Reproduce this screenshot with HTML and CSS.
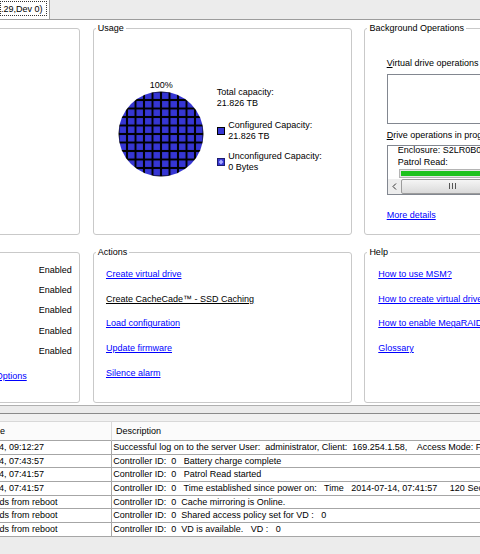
FILE: index.html
```html
<!DOCTYPE html>
<html lang="en">
<head>
<meta charset="utf-8">
<title>MegaRAID Storage Manager - Dashboard</title>
<link rel="stylesheet" href="styles.css">
</head>
<body>
<div class="tabstrip">
  <div class="tab"><span class="tab-label">.29,Dev 0)</span></div>
</div>

<main class="dash">
  <fieldset class="panel props">
    <legend>Properties</legend>
  </fieldset>

  <fieldset class="panel usage">
    <legend>Usage</legend>
    <div class="usage-body">
      <div class="pie">
        <div class="pie-pct">100%</div>
        <svg class="pie-chart" width="86" height="86" viewBox="0 0 86 86">
          <defs>
            <pattern id="grid" x="0.5" y="0.5" width="8.5" height="8.5" patternUnits="userSpaceOnUse">
              <rect width="8.5" height="8.5" fill="#000"/>
              <rect x="1" y="1" width="6.5" height="6.5" fill="#3636d4"/>
            </pattern>
          </defs>
          <circle cx="43" cy="43" r="42.5" fill="url(#grid)"/>
        </svg>
      </div>
      <div class="legend">
        <div class="legend-item"><div>Total capacity:<br>21.826 TB</div></div>
        <div class="legend-item conf"><span class="swatch swatch-conf"></span><div>Configured Capacity:<br>21.826 TB</div></div>
        <div class="legend-item unconf">
          <svg class="swatch" width="8" height="8" viewBox="0 0 8 8">
            <rect x="0.5" y="0.5" width="7" height="7" fill="#3636d4" stroke="#1c1c6e"/>
            <path d="M4 1.6 L6.4 4 L4 6.4 L1.6 4 Z" fill="#a9a9ff"/>
          </svg>
          <div>Unconfigured Capacity:<br>0 Bytes</div>
        </div>
      </div>
    </div>
  </fieldset>

  <fieldset class="panel bgops">
    <legend>Background Operations</legend>
    <div class="bg-body">
      <div class="bg-label"><u>V</u>irtual drive operations in progress:</div>
      <div class="vbox"></div>
      <div class="bg-label second"><u>D</u>rive operations in progress:</div>
      <div class="dlist">
        <div class="dl-line first">Enclosure: S2LR0B0S1 Slot: 3</div>
        <div class="dl-line">Patrol Read:</div>
        <div class="progress"><div class="progress-fill"></div></div>
        <div class="hscroll">
          <div class="hs-btn">
            <svg width="5" height="7" viewBox="0 0 5 7"><path d="M4 0.5 L1 3.5 L4 6.5" fill="none" stroke="#333" stroke-width="1"/></svg>
          </div>
          <div class="hs-thumb">
            <svg width="7" height="6" viewBox="0 0 7 6"><path d="M0.5 0 V6 M3.5 0 V6 M6.5 0 V6" stroke="#555" stroke-width="1"/></svg>
          </div>
        </div>
      </div>
      <a class="link more" href="#">More details</a>
    </div>
  </fieldset>

  <fieldset class="panel features">
    <legend>Features</legend>
    <div class="feat-body">
      <div class="feat-row">Enabled</div>
      <div class="feat-row">Enabled</div>
      <div class="feat-row">Enabled</div>
      <div class="feat-row">Enabled</div>
      <div class="feat-row">Enabled</div>
      <a class="link opt" href="#">Advanced Options</a>
    </div>
  </fieldset>

  <fieldset class="panel actions">
    <legend>Actions</legend>
    <nav class="link-list">
      <a class="link" href="#">Create virtual drive</a>
      <a class="link plain" href="#">Create CacheCade™ - SSD Caching</a>
      <a class="link" href="#">Load configuration</a>
      <a class="link" href="#">Update firmware</a>
      <a class="link" href="#">Silence alarm</a>
    </nav>
  </fieldset>

  <fieldset class="panel help">
    <legend>Help</legend>
    <nav class="link-list">
      <a class="link" href="#">How to use MSM?</a>
      <a class="link" href="#">How to create virtual drives?</a>
      <a class="link" href="#">How to enable MegaRAID Advanced Software Options?</a>
      <a class="link" href="#">Glossary</a>
    </nav>
  </fieldset>
</main>

<div class="splitter"><div class="split-groove"></div></div>

<section class="log">
  <div class="log-table">
    <div class="th c1">Date/Time</div><div class="th c2">Description</div>
    <div class="td c1">2014-07-14, 09:12:27</div><div class="td c2">Successful log on to the server User:  administrator, Client:  169.254.1.58,    Access Mode: Full</div>
    <div class="td c1">2014-07-14, 07:43:57</div><div class="td c2">Controller ID:  0   Battery charge complete</div>
    <div class="td c1">2014-07-14, 07:41:57</div><div class="td c2">Controller ID:  0   Patrol Read started</div>
    <div class="td c1">2014-07-14, 07:41:57</div><div class="td c2">Controller ID:  0   Time established since power on:   Time   2014-07-14, 07:41:57     120 Seconds</div>
    <div class="td c1">125 seconds from reboot</div><div class="td c2">Controller ID:  0  Cache mirroring is Online.</div>
    <div class="td c1">125 seconds from reboot</div><div class="td c2">Controller ID:  0  Shared access policy set for VD :   0</div>
    <div class="td c1">125 seconds from reboot</div><div class="td c2">Controller ID:  0  VD is available.   VD :   0</div>
  </div>
</section>
</body>
</html>
```
FILE: styles.css
```css
* { box-sizing: border-box; }
html, body { margin: 0; padding: 0; }
body {
  width: 480px;
  height: 554px;
  overflow: hidden;
  font-family: "Liberation Sans", Arial, sans-serif;
  font-size: 9px;
  line-height: 11px;
  color: #000;
  background: #ececec;
}

/* tab strip */
.tabstrip {
  height: 20px;
  background: #ececec;
  border-bottom: 1px solid #9c9c9c;
  display: flex;
  align-items: flex-start;
}
.tab {
  height: 19px;
  background: #fff;
  border-right: 1px solid #a0a0a0;
  padding: 1px 2px 0 0;
}
.tab-label {
  display: block;
  height: 15px;
  padding: 1px 3px 0 0;
  border: 1px dotted #333;
  line-height: 12px;
  white-space: nowrap;
}

/* dashboard grid */
.dash {
  background: #fff;
  display: grid;
  grid-template-columns: 140px 259px 1fr;
  grid-template-rows: 212px 156px;
  column-gap: 12.7px;
  row-gap: 12.5px;
  width: 660px;
  margin-left: -60px;
  padding: 2.5px 0 2px;
}
.panel {
  margin: 0;
  padding: 0;
  border: 1px solid #c9c9c9;
  border-radius: 3px;
  min-width: 0;
  background: #fff;
}
.panel > legend {
  margin-left: 2px;
  padding: 0 2px;
  line-height: 11px;
  white-space: nowrap;
}

/* usage */
.usage-body {
  display: flex;
  align-items: flex-start;
  padding: 46.5px 0 0 24.5px;
}
.pie {
  width: 86px;
  display: flex;
  flex-direction: column;
  align-items: center;
}
.pie-chart { display: block; }
.legend {
  margin: 6.5px 0 0 12.5px;
  display: flex;
  flex-direction: column;
  line-height: 11.5px;
  white-space: nowrap;
}
.legend-item { display: flex; align-items: center; gap: 3.5px; }
.legend-item.conf { margin-top: 10px; }
.legend-item.unconf { margin-top: 8px; }
.swatch { width: 8px; height: 8px; flex: none; display: block; }
.swatch-conf { background: #3636d4; border: 1px solid #000; }

/* background operations */
.bg-body {
  display: flex;
  flex-direction: column;
  padding: 24px 0 0 21.3px;
}
.bg-label { white-space: nowrap; }
.bg-label.second { margin-top: 5.5px; }
.vbox {
  height: 50px;
  margin-top: 5.8px;
  border: 1px solid #828790;
  background: #fff;
}
.dlist {
  height: 49.5px;
  margin-top: 4.5px;
  border: 1px solid #828790;
  display: flex;
  flex-direction: column;
  overflow: hidden;
}
.dl-line { padding-left: 10px; white-space: nowrap; }
.dl-line.first { margin-top: -1.5px; }
.dl-line + .dl-line { margin-top: 1.5px; }
.progress {
  height: 8.4px;
  margin: 1px 0 0 11.7px;
  border: 1px solid #b4b4b4;
  background: #e6e6e6;
  padding: 1px 0 1px 1px;
}
.progress-fill { height: 100%; background: #1ec21e; }
.hscroll {
  margin-top: auto;
  height: 15px;
  display: flex;
  background: #ededed;
}
.hs-btn {
  width: 13px;
  flex: none;
  display: flex;
  align-items: center;
  justify-content: center;
}
.hs-thumb {
  width: 104px;
  flex: none;
  border: 1px solid #9c9c9c;
  border-radius: 2px;
  background: linear-gradient(#f5f5f5, #dadada);
  display: flex;
  align-items: center;
  justify-content: center;
}
.hs-btn svg, .hs-thumb svg { display: block; }
.more { align-self: flex-start; margin-top: 15px; }

/* links */
.link { color: #0000ff; text-decoration: underline; white-space: nowrap; }
.link.plain { color: #000; }
.link-list {
  display: flex;
  flex-direction: column;
  align-items: flex-start;
  gap: 13.75px;
  padding: 10.8px 0 0 12.3px;
}
.help .link-list { padding-left: 12.9px; }

/* features */
.feat-body {
  display: flex;
  flex-direction: column;
  align-items: flex-end;
  gap: 9.4px;
  padding: 6.5px 7.3px 0 12.2px;
}
.opt { align-self: flex-start; margin-top: 4.6px; }

/* splitter */
.splitter {
  height: 16px;
  border-top: 1px solid #b0b0b0;
  background: #ebebeb;
}
.split-groove {
  margin-top: 7.3px;
  height: 7.7px;
  border-top: 1px solid #8a8a8a;
  background: #f1f1f1;
}

/* log table */
.log {
  height: 133px;
  overflow: hidden;
  background: #ececec;
}
.log-table {
  display: grid;
  grid-template-columns: 155.2px 600px;
  grid-template-rows: 20px;
  grid-auto-rows: 13.7px;
  margin-left: -43.5px;
  width: 755px;
  background: #fff;
}
.th {
  display: flex;
  align-items: center;
  padding-left: 4.3px;
  background: #fbfbfb;
  border-top: 1px solid #d8d8d8;
  border-bottom: 1px solid #a6a6a6;
  white-space: nowrap;
}
.th.c1 { padding-left: 7.3px; border-right: 1px solid #dadada; }
.td {
  display: flex;
  align-items: center;
  padding-left: 1.5px;
  border-bottom: 1px solid #a6a6a6;
  white-space: pre;
  overflow: hidden;
}
.td.c1 { border-right: 1px solid #a6a6a6; }
```
